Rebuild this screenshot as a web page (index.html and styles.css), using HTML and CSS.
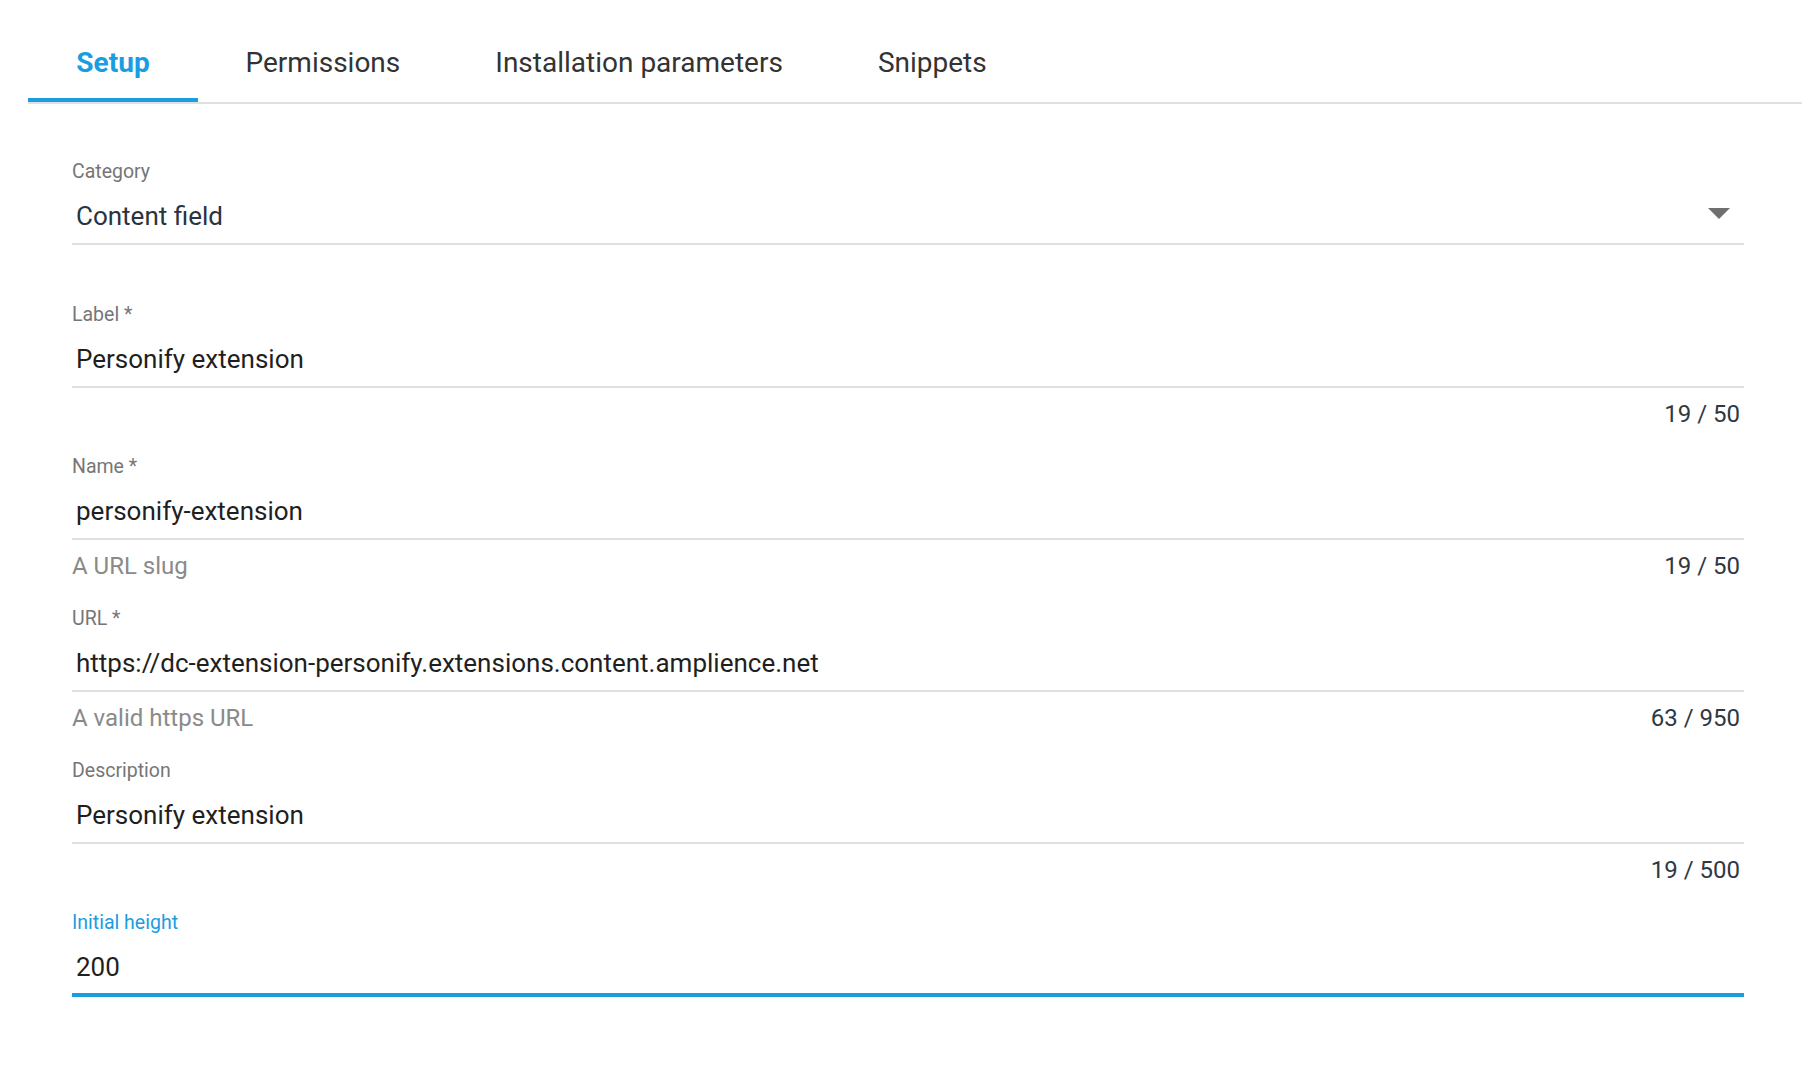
FILE: index.html
```html
<!DOCTYPE html>
<html lang="en">
<head>
<meta charset="utf-8">
<title>Extension setup</title>
<link rel="stylesheet" href="styles.css">
</head>
<body>
<nav class="tabs">
  <div class="tab active">Setup</div>
  <div class="tab">Permissions</div>
  <div class="tab">Installation parameters</div>
  <div class="tab">Snippets</div>
</nav>
<main class="form">
  <div class="field select">
    <div class="label">Category</div>
    <div class="input">
      <span class="value slate">Content field</span>
      <span class="arrow"></span>
    </div>
  </div>

  <div class="field">
    <div class="label">Label *</div>
    <div class="input"><span class="value">Personify extension</span></div>
    <div class="helper"><span></span><span class="counter">19 / 50</span></div>
  </div>

  <div class="field">
    <div class="label">Name *</div>
    <div class="input"><span class="value">personify-extension</span></div>
    <div class="helper"><span class="hint">A URL slug</span><span class="counter">19 / 50</span></div>
  </div>

  <div class="field">
    <div class="label">URL *</div>
    <div class="input"><span class="value">https://dc-extension-personify.extensions.content.amplience.net</span></div>
    <div class="helper"><span class="hint">A valid https URL</span><span class="counter">63 / 950</span></div>
  </div>

  <div class="field">
    <div class="label">Description</div>
    <div class="input"><span class="value">Personify extension</span></div>
    <div class="helper"><span></span><span class="counter">19 / 500</span></div>
  </div>

  <div class="field focused">
    <div class="label">Initial height</div>
    <div class="input"><span class="value">200</span></div>
  </div>
</main>
</body>
</html>
```

FILE: styles.css
```css
html, body {
  margin: 0;
  padding: 0;
  background: #ffffff;
}

body {
  font-family: Roboto, "Liberation Sans", Arial, sans-serif;
  color: #222222;
}

.tabs {
  display: flex;
  margin-left: 28px;
  border-bottom: 2px solid #e0e0e0;
}

.tab {
  min-width: 170px;
  box-sizing: border-box;
  padding: 43px 47.5px 15px;
  line-height: 40px;
  font-size: 28px;
  text-align: center;
  color: #333333;
  border-bottom: 4px solid transparent;
  white-space: nowrap;
}

.tab.active {
  color: #1a9de1;
  font-weight: 700;
  border-bottom-color: #1a9de1;
}

.form {
  padding: 56px 58px 0 72px;
}

.field {
  margin-bottom: 27px;
}

.field.select {
  margin-bottom: 58px;
}

.label {
  font-size: 19.5px;
  line-height: 24px;
  height: 24px;
  color: #767676;
  margin-bottom: 6px;
}

.input {
  display: flex;
  align-items: center;
  height: 53px;
  border-bottom: 2px solid #e0e0e0;
  padding: 0 4px;
}

.value {
  flex: 1;
  font-size: 26px;
  line-height: 53px;
  color: #1f1f1f;
  white-space: nowrap;
}

.value.slate {
  color: #2a3340;
}

.arrow {
  width: 0;
  height: 0;
  border-left: 11px solid transparent;
  border-right: 11px solid transparent;
  border-top: 11px solid #6f6f6f;
  margin-right: 10px;
  margin-bottom: 6px;
}

.helper {
  display: flex;
  justify-content: space-between;
  margin-top: 12px;
  height: 28px;
  line-height: 28px;
  font-size: 24px;
}

.hint {
  color: #8a8a8a;
}

.counter {
  color: #2f3944;
  padding-right: 4px;
}

.field.focused .label {
  color: #1a9de1;
}

.field.focused .input {
  height: 52px;
  border-bottom: 4px solid #1a9de1;
}
```
